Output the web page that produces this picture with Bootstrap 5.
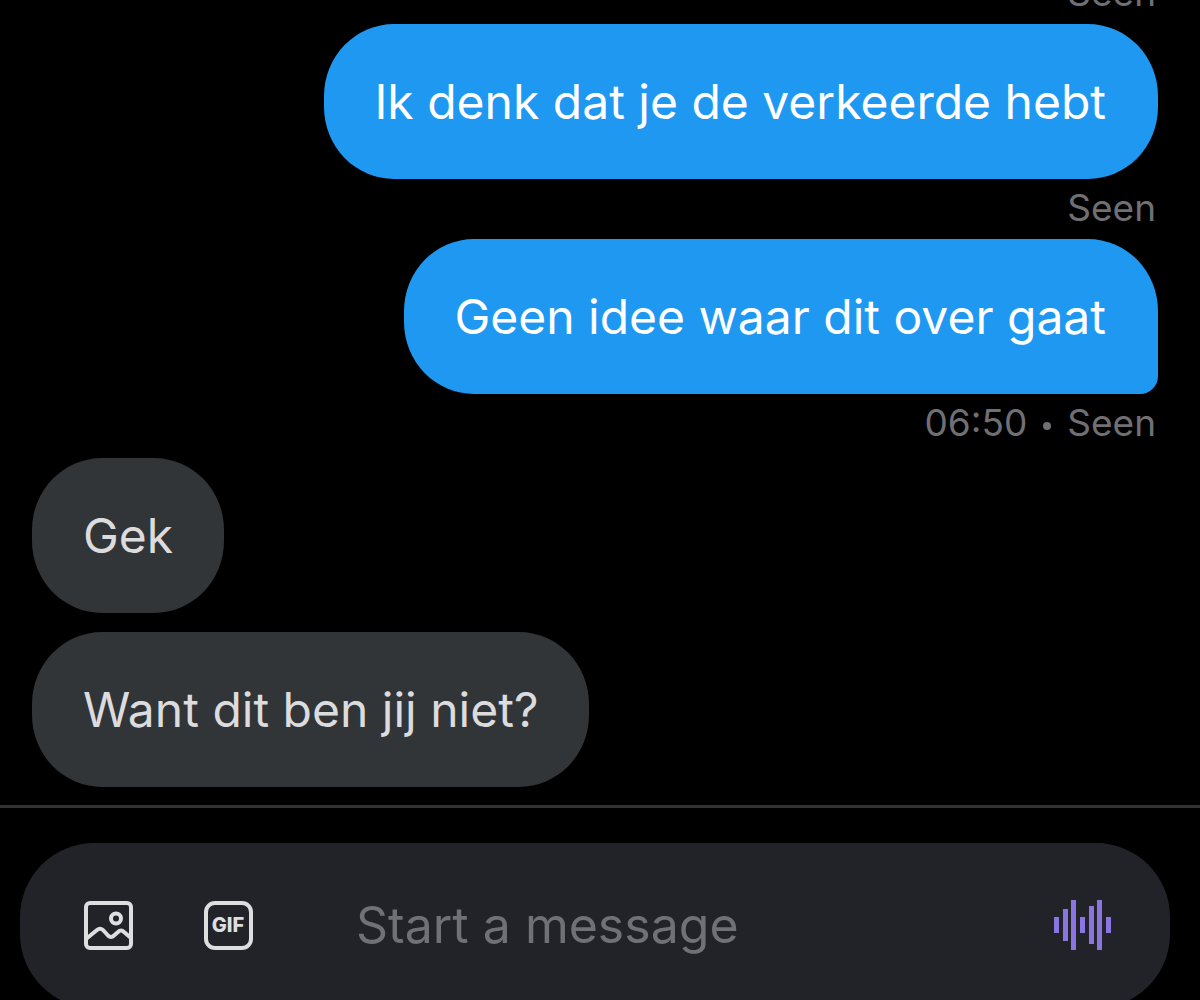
<!DOCTYPE html>
<html lang="nl" data-bs-theme="dark">
<head>
<meta charset="utf-8">
<meta name="viewport" content="width=device-width, initial-scale=1">
<title>Messages</title>
<link href="https://cdn.jsdelivr.net/npm/bootstrap@5.3.0/dist/css/bootstrap.min.css" rel="stylesheet">
<style>
  body { background: #000; font-family: Inter, "Liberation Sans", sans-serif; }
  .thread { padding: 0 42px 18px 32px; min-height: 0; }
  .bubble { padding: 40px 51px; font-size: 48px; line-height: 75px; border-radius: 70px / 72px; }
  .bubble-out { background: #1e98f0; color: #fff; padding-right: 52px; padding-left: 50px; }
  .bubble-in { background: #313538; color: #dcdcde; margin-bottom: 19px; }
  .bubble-in:last-child { margin-bottom: 0; }
  .bubble-tail { border-bottom-right-radius: 18px; }
  .status { color: #707074; font-size: 37px; line-height: 58px; padding: 0 2px 2px 0; }
  .status-last { margin-bottom: 4px; gap: 16px; }
  .status-dot { width: 8px; height: 8px; margin-top: 6px; background: #707074; }
  .composer-area { border-top: 3px solid #323236; padding: 35px 30px 0 20px; margin-bottom: -8px; }
  .composer { background: #222328; height: 165px; padding: 0 57px 2px 64px; border-radius: 74px; }
  .tool-btn { line-height: 0; }
  .tool-gif { margin-left: 70px; }
  .message-field { margin-left: 102px; font-size: 50px; line-height: 76px; min-width: 0; }
  .message-field, .message-field:focus { background: transparent; color: #dcdcde; box-shadow: none; }
  .message-field::placeholder { color: #707077; opacity: 1; }
</style>
<script src="https://cdn.jsdelivr.net/npm/bootstrap@5.3.0/dist/js/bootstrap.bundle.min.js"></script>
</head>
<body>
<div class="d-flex flex-column vh-100 overflow-hidden">
  <main class="thread flex-grow-1 d-flex flex-column justify-content-end">
    <div class="status align-self-end">Seen</div>
    <div class="bubble bubble-out align-self-end">Ik denk dat je de verkeerde hebt</div>
    <div class="status align-self-end">Seen</div>
    <div class="bubble bubble-out bubble-tail align-self-end">Geen idee waar dit over gaat</div>
    <div class="status status-last align-self-end d-flex align-items-center">
      <span>06:50</span><span class="status-dot rounded-circle"></span><span>Seen</span>
    </div>
    <div class="bubble bubble-in align-self-start">Gek</div>
    <div class="bubble bubble-in align-self-start">Want dit ben jij niet?</div>
  </main>
  <footer class="composer-area flex-shrink-0">
    <form class="composer d-flex align-items-center">
      <button type="button" class="tool-btn btn p-0 border-0" aria-label="Photo">
        <svg width="50" height="50" viewBox="0 0 50 50" fill="none" stroke="#dedee1" stroke-width="4" stroke-linejoin="round">
          <rect x="2" y="3" width="45" height="45" rx="4"/>
          <circle cx="32" cy="18.500" r="5"/>
          <path d="M2 39L13 30Q16 27.500 19 30L24 35.500Q27 38.500 30 35.500L34 32Q37 29 40 32L47 38"/>
        </svg>
      </button>
      <button type="button" class="tool-btn tool-gif btn p-0 border-0" aria-label="GIF">
        <svg width="50" height="50" viewBox="0 0 50 50">
          <rect x="2" y="3" width="45" height="45" rx="9" fill="none" stroke="#dedee1" stroke-width="4"/>
          <text x="24" y="32" text-anchor="middle" font-family="Inter, sans-serif" font-size="20" font-weight="800" fill="#dedee1">GIF</text>
        </svg>
      </button>
      <input type="text" class="message-field form-control border-0 p-0 flex-grow-1" placeholder="Start a message" aria-label="Start a message">
      <button type="button" class="tool-btn btn p-0 border-0" aria-label="Voice message">
        <svg width="60" height="50" viewBox="0 0 60 50" fill="#8a75e2">
          <rect x="1" y="17" width="5" height="16"/>
          <rect x="10" y="9" width="5" height="32"/>
          <rect x="18" y="0" width="5" height="50"/>
          <rect x="27" y="17" width="5" height="16"/>
          <rect x="36" y="6" width="5" height="38"/>
          <rect x="44" y="0" width="5" height="50"/>
          <rect x="53" y="17" width="5" height="16"/>
        </svg>
      </button>
    </form>
  </footer>
</div>
</body>
</html>
